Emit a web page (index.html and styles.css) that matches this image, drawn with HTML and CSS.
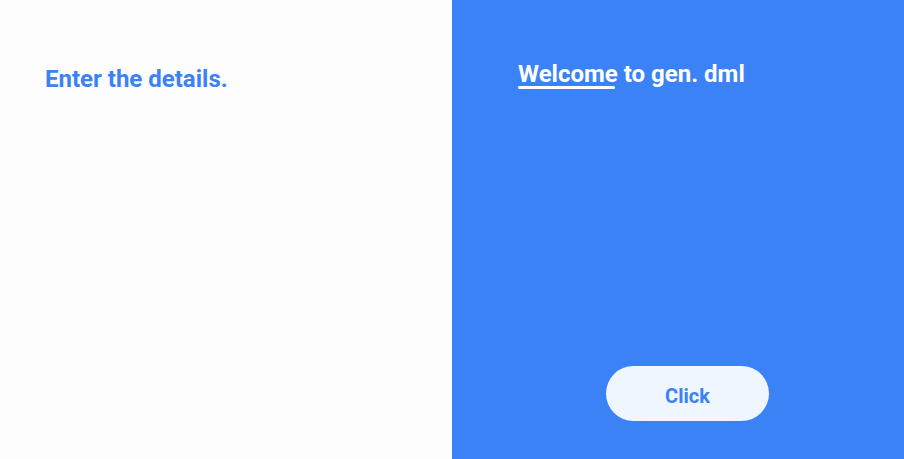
FILE: index.html
```html
<!DOCTYPE html>
<html>
<head>
<meta charset="utf-8">
<link rel="stylesheet" href="styles.css">
</head>
<body>
<div class="page">
  <section class="left">
    <h2 class="left-title">Enter the details.</h2>
  </section>
  <section class="right">
    <h1 class="right-title"><span class="underlined">Welcome</span> to gen. dml</h1>
    <button class="btn">Click</button>
  </section>
</div>
</body>
</html>
```

FILE: styles.css
```css
html, body {
  margin: 0;
  padding: 0;
  height: 100%;
}
body {
  font-family: Roboto, "Liberation Sans", sans-serif;
}
.page {
  display: grid;
  grid-template-columns: 452px 452px;
  height: 459px;
}
.left {
  background: #fdfdfd;
  padding: 63px 0 0 45px;
}
.left-title {
  margin: 0;
  font-size: 24px;
  font-weight: 700;
  color: #3b82f6;
  line-height: 32px;
}
.right {
  background: #3b82f6;
  display: flex;
  flex-direction: column;
  padding: 58px 0 0 66px;
  box-sizing: border-box;
}
.right-title {
  margin: 0;
  font-size: 24px;
  font-weight: 700;
  color: #ffffff;
  line-height: 32px;
}
.underlined {
  position: relative;
}
.underlined::after {
  content: "";
  position: absolute;
  left: 0;
  right: 3px;
  bottom: -1px;
  height: 3px;
  border-radius: 2px;
  background: #ffffff;
}
.btn {
  margin-top: 276px;
  margin-left: 88px;
  align-self: flex-start;
  width: 163px;
  height: 55px;
  padding: 4px 0 0;
  border: none;
  border-radius: 28px;
  background: #eff6ff;
  color: #3b82f6;
  font-family: Roboto, "Liberation Sans", sans-serif;
  font-size: 20px;
  font-weight: 700;
}
```
